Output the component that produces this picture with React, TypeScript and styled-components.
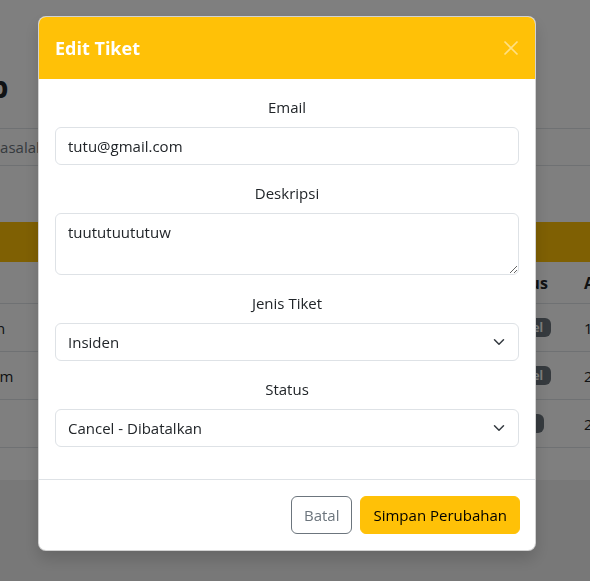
import styled, { createGlobalStyle } from 'styled-components';

const GlobalStyle = createGlobalStyle`
  html, body {
    margin: 0;
    padding: 0;
  }
  body {
    background: #f0f0f0;
    font-family: 'Open Sans', 'Noto Sans', sans-serif;
    color: #212529;
    height: 581px;
    overflow: hidden;
  }
  * {
    box-sizing: border-box;
  }
`;

/* ---------- page behind the modal ---------- */

const Page = styled.div`
  background: #ffffff;
  margin-left: -200px;
  width: 900px;
  padding: 68px 0 32px;
`;

const Heading = styled.h2`
  margin: 0 0 22px 3px;
  font-size: 30px;
  font-weight: 700;
  line-height: 38px;
  white-space: nowrap;
`;

const Search = styled.div`
  margin: 0 0 56px 142px;
  height: 38px;
  border: 1px solid #dee2e6;
  border-radius: 6px;
  padding: 0 12px;
  display: flex;
  align-items: center;
  font-size: 15px;
  color: #6c757d;
`;

const TableBar = styled.div`
  height: 40px;
  background: #ffc107;
`;

const TableRow = styled.div<{ $head?: boolean }>`
  display: grid;
  grid-template-columns: 40px 106px 150px 393px 87px 1fr;
  height: ${p => (p.$head ? '42px' : '48px')};
  border-bottom: 1px solid #dee2e6;
  font-size: ${p => (p.$head ? '16px' : '15px')};
  font-weight: ${p => (p.$head ? 700 : 400)};
`;

const Cell = styled.div`
  display: flex;
  align-items: center;
  padding: 0 8px;
  white-space: nowrap;
  overflow: hidden;
`;

const Badge = styled.span`
  display: inline-block;
  background: #6c757d;
  color: #ffffff;
  font-size: 11.5px;
  font-weight: 700;
  line-height: 1;
  padding: 4px 8px;
  border-radius: 6px;
`;

/* ---------- modal ---------- */

const Backdrop = styled.div`
  position: fixed;
  inset: 0;
  background: rgba(0, 0, 0, 0.5);
  display: flex;
  justify-content: center;
  align-items: flex-start;
  padding: 16px 16px 0 0;
`;

const Dialog = styled.div`
  width: 498px;
  background: #ffffff;
  border: 1px solid rgba(0, 0, 0, 0.175);
  border-radius: 8px;
  overflow: hidden;
  box-shadow: 0 8px 16px rgba(0, 0, 0, 0.15);
`;

const Header = styled.div`
  background: #ffc107;
  padding: 16px;
  display: flex;
  align-items: center;
  justify-content: space-between;
`;

const Title = styled.h5`
  margin: 0;
  color: #ffffff;
  font-size: 18px;
  font-weight: 700;
  line-height: 30px;
`;

const CloseButton = styled.button`
  width: 16px;
  height: 16px;
  padding: 0;
  border: none;
  background: transparent;
  display: flex;
  align-items: center;
  justify-content: center;
  opacity: 0.5;
  cursor: pointer;
`;

const Body = styled.div`
  padding: 16px;
`;

const Field = styled.div`
  margin-bottom: 16px;
`;

const Label = styled.label`
  display: block;
  text-align: center;
  margin-bottom: 8px;
  font-size: 15px;
  line-height: 24px;
`;

const controlCss = `
  display: block;
  width: 100%;
  padding: 6px 12px;
  font-family: 'Open Sans', 'Noto Sans', sans-serif;
  font-size: 15px;
  line-height: 24px;
  color: #212529;
  background: #ffffff;
  border: 1px solid #dee2e6;
  border-radius: 6px;
  outline: none;
`;

const Input = styled.input`
  ${controlCss}
  height: 38px;
`;

const TextArea = styled.textarea`
  ${controlCss}
  height: 62px;
  resize: vertical;
`;

const SelectWrap = styled.div`
  position: relative;
`;

const Select = styled.select`
  ${controlCss}
  height: 38px;
  appearance: none;
  padding-right: 36px;
`;

const Chevron = styled.svg`
  position: absolute;
  right: 12px;
  top: 13px;
  pointer-events: none;
`;

const Footer = styled.div`
  border-top: 1px solid #dee2e6;
  padding: 16px 15px;
  display: flex;
  justify-content: flex-end;
  gap: 8px;
`;

const Button = styled.button<{ $primary?: boolean }>`
  height: 38px;
  padding: 6px 12px;
  font-family: 'Open Sans', 'Noto Sans', sans-serif;
  font-size: 15px;
  line-height: 24px;
  border-radius: 6px;
  border: 1px solid ${p => (p.$primary ? '#ffc107' : '#6c757d')};
  background: ${p => (p.$primary ? '#ffc107' : 'transparent')};
  color: ${p => (p.$primary ? '#000000' : '#6c757d')};
  cursor: pointer;
`;

const tickets = [
  { no: 1, nama: 'tutu', jenis: 'Insiden', desk: 'tuututuututuw', status: 'Cancel', tanggal: '12/05/2024' },
  { no: 2, nama: 'rina', jenis: 'Problem', desk: 'Printer tidak bisa dipakai', status: 'Cancel', tanggal: '22/05/2024' },
  { no: 3, nama: 'budi', jenis: 'Lain', desk: 'Akses email gagal', status: 'Open', tanggal: '23/05/2024' },
];

const ChevronIcon = () => (
  <Chevron width="16" height="12" viewBox="0 0 16 16">
    <path d="M2 5l6 6 6-6" fill="none" stroke="#343a40" strokeWidth="2" strokeLinecap="round" strokeLinejoin="round" />
  </Chevron>
);

const App = () => {
  return (
    <>
      <GlobalStyle />
      <Page>
        <Heading>Helpdesk App</Heading>
        <Search>Cari Masalah...</Search>
        <TableBar />
        <TableRow $head>
          <Cell>No</Cell>
          <Cell>Nama</Cell>
          <Cell>Jenis</Cell>
          <Cell>Deskripsi</Cell>
          <Cell>Status</Cell>
          <Cell>Ajuan</Cell>
        </TableRow>
        {tickets.map(t => (
          <TableRow key={t.no}>
            <Cell>{t.no}</Cell>
            <Cell>{t.nama}</Cell>
            <Cell>{t.jenis}</Cell>
            <Cell>{t.desk}</Cell>
            <Cell><Badge>{t.status}</Badge></Cell>
            <Cell>{t.tanggal}</Cell>
          </TableRow>
        ))}
      </Page>

      <Backdrop>
        <Dialog>
          <Header>
            <Title>Edit Tiket</Title>
            <CloseButton aria-label="Close">
              <svg width="16" height="16" viewBox="0 0 16 16">
                <path d="M1.5 1.5l13 13M14.5 1.5l-13 13" stroke="#ffffff" strokeWidth="1.6" />
              </svg>
            </CloseButton>
          </Header>
          <Body>
            <Field>
              <Label>Email</Label>
              <Input defaultValue="tutu@gmail.com" />
            </Field>
            <Field>
              <Label>Deskripsi</Label>
              <TextArea rows={2} defaultValue="tuututuututuw" />
            </Field>
            <Field>
              <Label>Jenis Tiket</Label>
              <SelectWrap>
                <Select defaultValue="Insiden">
                  <option>Insiden</option>
                  <option>Problem</option>
                  <option>Request</option>
                </Select>
                <ChevronIcon />
              </SelectWrap>
            </Field>
            <Field>
              <Label>Status</Label>
              <SelectWrap>
                <Select defaultValue="Cancel - Dibatalkan">
                  <option>Open - Dibuka</option>
                  <option>Progress - Dikerjakan</option>
                  <option>Cancel - Dibatalkan</option>
                  <option>Close - Selesai</option>
                </Select>
                <ChevronIcon />
              </SelectWrap>
            </Field>
          </Body>
          <Footer>
            <Button>Batal</Button>
            <Button $primary>Simpan Perubahan</Button>
          </Footer>
        </Dialog>
      </Backdrop>
    </>
  );
};

export default App;
